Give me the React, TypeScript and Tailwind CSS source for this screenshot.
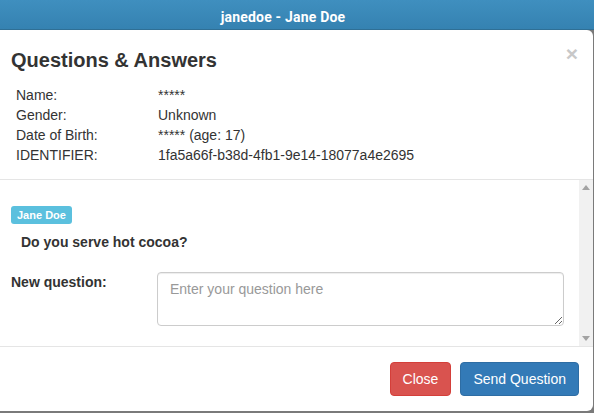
const info = [
  ['Name:', '*****'],
  ['Gender:', 'Unknown'],
  ['Date of Birth:', '***** (age: 17)'],
  ['IDENTIFIER:', '1fa5a66f-b38d-4fb1-9e14-18077a4e2695'],
]

export default function App() {
  return (
    <div className="h-[413px] w-[594px] overflow-hidden bg-[#7a7a7a] font-['Liberation_Sans',Arial,sans-serif] text-[14px] text-[#333]">
      <div className="flex h-[30px] items-center justify-center border-b border-[#2f6f95] bg-gradient-to-b from-[#3f8fbf] to-[#3582b1] pr-[28px] pt-[6px] font-['Roboto',sans-serif] text-[14px] font-bold tracking-[0.2px] text-white">
        janedoe - Jane Doe
      </div>

      <div className="flex h-[381px] w-[593px] flex-col rounded-r-[6px] bg-white">
        <div className="flex items-start justify-between pl-[11px] pr-[15px] pt-[17px]">
          <h4 className="text-[20px] font-bold leading-[26px] text-[#333]">Questions &amp; Answers</h4>
          <span className="mt-[-4px] text-[21px] font-bold leading-none text-[#c8c8c8]">×</span>
        </div>

        <div className="px-[16px] pt-[12px] pb-[14px]">
          {info.map(([label, value]) => (
            <div key={label} className="flex h-[20px] items-center leading-[20px]">
              <span className="w-[142px]">{label}</span>
              <span>{value}</span>
            </div>
          ))}
        </div>

        <div className="flex h-[168px] border-y border-[#e5e5e5]">
          <div className="flex-1 pl-[11px] pt-[24px]">
            <span className="inline-block rounded-[3px] bg-[#5bc0de] px-[6px] py-[3px] text-[11px] font-bold leading-[12px] text-white">
              Jane Doe
            </span>
            <p className="mt-[7px] pl-[10px] font-bold leading-[20px]">Do you serve hot cocoa?</p>
            <div className="mt-[20px] flex">
              <label className="w-[146px] pt-[1px] font-bold leading-[18px]">New question:</label>
              <textarea
                placeholder="Enter your question here"
                className="h-[54px] w-[407px] rounded-[4px] border border-[#ccc] px-[12px] py-[6px] text-[14px] leading-[20px] text-[#555] shadow-[inset_0_1px_1px_rgba(0,0,0,0.075)] outline-none placeholder:text-[#999]"
              />
            </div>
          </div>
          <div className="flex w-[14px] flex-col items-center justify-between bg-[#f1f1f1] py-[5px]">
            <svg width="8" height="5" viewBox="0 0 8 5">
              <path d="M4 0 L8 5 L0 5 Z" fill="#a3a3a3" />
            </svg>
            <svg width="8" height="5" viewBox="0 0 8 5">
              <path d="M0 0 L8 0 L4 5 Z" fill="#a3a3a3" />
            </svg>
          </div>
        </div>

        <div className="flex justify-end gap-[9px] pr-[14px] pt-[15px]">
          <button className="h-[34px] rounded-[4px] border border-[#d43f3a] bg-[#d9534f] px-[12px] text-[14px] text-white">
            Close
          </button>
          <button className="h-[34px] rounded-[4px] border border-[#2e6da4] bg-[#337ab7] px-[12px] text-[14px] text-white">
            Send Question
          </button>
        </div>
      </div>
    </div>
  )
}
